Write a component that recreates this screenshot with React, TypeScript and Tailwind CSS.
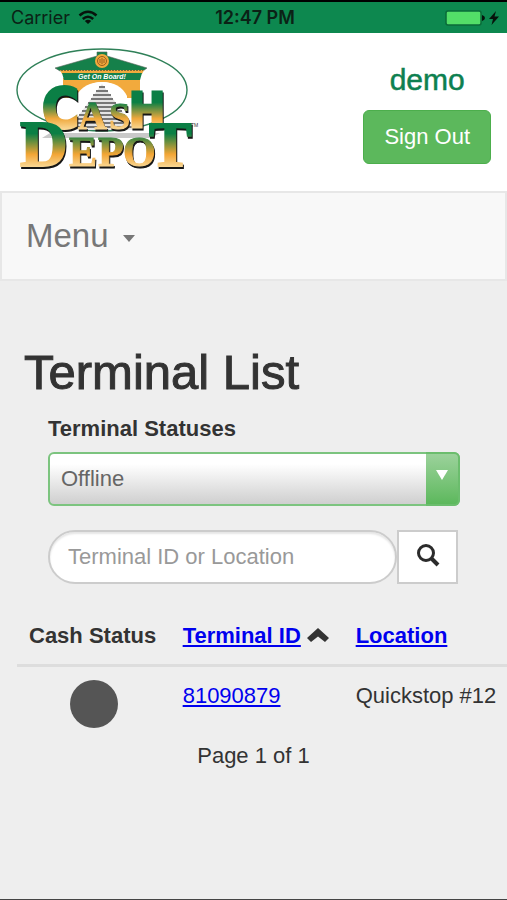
import { useState } from "react";

const terminals = [{ id: "81090879", location: "Quickstop #12", status: "bg-[#555]" }];

const statuses = ["Offline", "Online", "All"];

interface LogoLetter {
  char: string;
  x: number;
  y: number;
  size: number;
  font: string;
  fill: string;
  weight: number;
}

const sans = "'DejaVu Sans Condensed', 'DejaVu Sans', sans-serif";
const serif = "'Liberation Serif', serif";

const logoLetters: LogoLetter[] = [
  { char: "C", x: 42, y: 127, size: 56, font: sans, fill: "url(#cash)", weight: 3 },
  { char: "A", x: 78, y: 129, size: 40, font: serif, fill: "url(#cash)", weight: 1 },
  { char: "S", x: 109, y: 129, size: 38, font: serif, fill: "url(#cash)", weight: 1 },
  { char: "H", x: 129, y: 127, size: 48, font: sans, fill: "url(#cash)", weight: 3 },
  { char: "D", x: 20, y: 166, size: 66, font: serif, fill: "url(#depot)", weight: 2 },
  { char: "E", x: 69, y: 166, size: 42, font: serif, fill: "url(#depot)", weight: 1 },
  { char: "P", x: 98, y: 166, size: 42, font: serif, fill: "url(#depot)", weight: 1 },
  { char: "O", x: 123, y: 166, size: 42, font: serif, fill: "url(#depot)", weight: 1 },
  { char: "T", x: 149, y: 166, size: 64, font: serif, fill: "url(#depot)", weight: 2 },
];

function Logo() {
  return (
    <svg
      viewBox="12 44 188 132"
      className="h-[132px] w-[188px] shrink-0 overflow-visible"
      role="img"
      aria-label="Cash Depot"
    >
      <defs>
        <linearGradient id="cash" gradientUnits="userSpaceOnUse" x1="0" y1="84" x2="0" y2="130">
          <stop offset="0.4" stopColor="#0b7f45" />
          <stop offset="0.75" stopColor="#efa83c" />
          <stop offset="1" stopColor="#fbdc9c" />
        </linearGradient>
        <linearGradient id="depot" gradientUnits="userSpaceOnUse" x1="0" y1="122" x2="0" y2="168">
          <stop offset="0.25" stopColor="#0b7f45" />
          <stop offset="0.7" stopColor="#f2a535" />
          <stop offset="1" stopColor="#fbdc9c" />
        </linearGradient>
      </defs>
      <ellipse cx="102" cy="90" rx="85" ry="41" fill="#fff" stroke="#2f8058" strokeWidth="1.4" />
      <path d="M63 78H140V98H127Q118 82 102 82T76 98H63Z" fill="#f2aa3d" />
      <path d="M76 112V96Q84 82 102 82T127 96V112Z" fill="#fff" />
      <path d="M97 52H107V56L147 68L143 71H60L55 68L97 56Z" fill="#15804a" stroke="#59675c" strokeWidth="0.6" />
      <path d="M60 70H144L142 74H62Z" fill="#f2aa3d" />
      <path d="M61 70.500H143" stroke="#7d6b35" strokeWidth="1" strokeDasharray="2 1" />
      <path d="M62 73H142L140 80H64Z" fill="#15804a" />
      <text
        x="102"
        y="79"
        textAnchor="middle"
        fontSize="7"
        fontWeight="700"
        fontStyle="italic"
        fontFamily="'Liberation Sans', sans-serif"
        fill="#fff"
      >
        Get On Board!
      </text>
      <circle cx="102" cy="61" r="7" fill="#f2aa3d" />
      <circle cx="102" cy="61" r="4.500" fill="none" stroke="#9a5c1c" strokeWidth="1" />
      <path d="M100 59V63M102 58V64M104 59V63" stroke="#9a5c1c" strokeWidth="1" />
      <path d="M102 84L136 130H68Z" fill="#e4e4e4" />
      <path
        d="M99 87H105M96 91H108M93 95H111M91 99H113M88 103H116M85 107H119M82 111H122M79 115H125M76 119H128M73 123H131M70 127H134"
        stroke="#777"
        strokeWidth="2"
      />
      <path d="M50 133H160L150 138H42Z" fill="#c9c9c9" />
      {logoLetters.map((l) => (
        <text
          key={l.char}
          x={l.x}
          y={l.y}
          fontFamily={l.font}
          fontSize={l.size}
          fontWeight="700"
          fill={l.fill}
          stroke={l.fill}
          strokeWidth={l.weight}
          className="drop-shadow-[1px_2px_0_#161616]"
        >
          {l.char}
        </text>
      ))}
      <text x="191" y="127" fontSize="5" fontFamily="'Liberation Sans', sans-serif" fill="#333">
        TM
      </text>
    </svg>
  );
}

function StatusBar() {
  return (
    <div className="grid h-[33px] grid-cols-3 items-center border-t-2 border-black bg-[#0d884f] pr-2 pl-[11px] font-['Inter',sans-serif] text-lg text-[#0b2216]">
      <div className="flex items-center gap-2">
        <span>Carrier</span>
        <svg viewBox="0 0 20 15" className="h-[15px] w-5" fill="none" stroke="#07130c" aria-hidden>
          <path d="M1.500 5.500Q10 -2 18.500 5.500" strokeWidth="2.600" />
          <path d="M4.800 9Q10 4.500 15.200 9" strokeWidth="2.500" />
          <path d="M10 14L6.800 11Q10 8.500 13.200 11Z" fill="#07130c" stroke="none" />
        </svg>
      </div>
      <span className="text-center font-semibold whitespace-nowrap">12:47 PM</span>
      <div className="flex items-center justify-end gap-1">
        <svg viewBox="0 0 40 16" className="h-4 w-10" aria-hidden>
          <rect x="1" y="1" width="35" height="14" rx="2" fill="#53de68" stroke="#0a6b39" strokeWidth="1.500" />
          <path d="M37 5Q40 6 40 8T37 11Z" fill="#07130c" />
        </svg>
        <svg viewBox="0 0 10 16" className="h-4 w-2.5" aria-hidden>
          <path d="M7 1L0 9H4L2.500 15L10 6.500H5.500Z" fill="#07130c" />
        </svg>
      </div>
    </div>
  );
}

function Header() {
  return (
    <header className="flex items-start justify-between bg-white pt-[11px] pr-4 pb-[15px] pl-3">
      <Logo />
      <div className="flex flex-col items-center gap-3 pt-[18px]">
        <span className="text-[30px] leading-9 text-[#0d8050] [-webkit-text-stroke:0.5px_#0d8050]">
          demo
        </span>
        <button
          type="button"
          className="h-[54px] rounded-md border border-[#4cae4c] bg-[#5cb85c] px-5 text-white"
        >
          Sign Out
        </button>
      </div>
    </header>
  );
}

function StatusSelect() {
  const [status, setStatus] = useState(statuses[0]);

  return (
    <div className="relative mt-[7px]">
      <select
        id="status"
        value={status}
        onChange={(e) => setStatus(e.target.value)}
        className="h-[54px] w-full appearance-none rounded-md border-2 border-[#7cc47f] bg-linear-to-b from-white from-20% to-[#cfcfcf] pr-12 pl-[11px] text-[#666]"
      >
        {statuses.map((s) => (
          <option key={s}>{s}</option>
        ))}
      </select>
      <div className="pointer-events-none absolute inset-y-0 right-0 flex w-[34px] items-center justify-center rounded-r-md border-2 border-l-0 border-[#6bbd6d] bg-linear-to-b from-[#9bd29b] to-[#5cb85c] pb-2">
        <svg viewBox="0 0 12 10" className="h-2.5 w-3" aria-hidden>
          <path d="M0 0H12L6 10Z" fill="#fff" />
        </svg>
      </div>
    </div>
  );
}

function SearchBar() {
  return (
    <div className="mt-6 flex pr-0.5">
      <input
        type="text"
        aria-label="Terminal ID or Location"
        placeholder="Terminal ID or Location"
        className="h-[54px] min-w-0 flex-1 rounded-full border-2 border-[#ccc] bg-white px-[18px] shadow-[inset_0_2px_2px_rgba(0,0,0,0.1)] placeholder:text-[#999]"
      />
      <button
        type="button"
        aria-label="Search"
        className="flex h-[54px] w-[61px] items-center justify-center border-2 border-[#ccc] bg-white pb-1"
      >
        <svg viewBox="0 0 24 24" className="h-6 w-6" fill="none" stroke="#2b2b2b" aria-hidden>
          <circle cx="10" cy="10" r="7.500" strokeWidth="3" />
          <path d="M15 15L22 22" strokeWidth="4" />
        </svg>
      </button>
    </div>
  );
}

function TerminalTable() {
  return (
    <table className="mt-6 w-full text-left whitespace-nowrap">
      <thead>
        <tr className="border-b-3 border-[#ddd]">
          <th className="px-3 py-3">Cash Status</th>
          <th className="px-3 py-3">
            <div className="flex items-center gap-1.5">
              <a href="#terminal-id" className="text-[#0000ee] underline">
                Terminal ID
              </a>
              <svg viewBox="0 0 22 14" className="mb-0.5 h-3.5 w-[22px]" aria-hidden>
                <path d="M11 0L22 10L18 14L11 8.500L4 14L0 10Z" fill="#333" />
              </svg>
            </div>
          </th>
          <th className="py-3 pr-2 pl-3">
            <a href="#location" className="text-[#0000ee] underline">
              Location
            </a>
          </th>
        </tr>
      </thead>
      <tbody>
        {terminals.map((t) => (
          <tr key={t.id} className="align-top">
            <td className="px-3 pt-[13px]">
              <div className={`mx-auto h-12 w-12 rounded-full ${t.status}`} />
            </td>
            <td className="px-3 pt-[13px]">
              <a href={`#${t.id}`} className="text-[#0000ee] underline">
                {t.id}
              </a>
            </td>
            <td className="pt-[13px] pr-2 pl-3">{t.location}</td>
          </tr>
        ))}
      </tbody>
    </table>
  );
}

export default function App() {
  return (
    <div className="min-h-screen overflow-x-hidden border-b border-[#444] bg-[#eee] font-['Liberation_Sans',Arial,sans-serif] text-[22px] leading-8 text-[#333]">
      <StatusBar />
      <Header />
      <nav className="border-2 border-[#e7e7e7] bg-[#f8f8f8] px-6 py-[23px]">
        <button type="button" className="flex items-center gap-3.5 text-[33px] leading-10 text-[#777]">
          Menu
          <svg viewBox="0 0 12 7" className="mt-1 h-[7px] w-3" aria-hidden>
            <path d="M0 0H12L6 7Z" fill="#777" />
          </svg>
        </button>
      </nav>
      <main className="pt-[65px]">
        <h1 className="px-6 text-[49px] leading-[52px] [-webkit-text-stroke:1px_#333]">Terminal List</h1>
        <form className="mt-[15px] pr-[47px] pl-12" onSubmit={(e) => e.preventDefault()}>
          <label htmlFor="status" className="block font-bold">
            Terminal Statuses
          </label>
          <StatusSelect />
          <SearchBar />
        </form>
        <div className="pl-[17px]">
          <TerminalTable />
        </div>
        <p className="mt-3 text-center">Page 1 of 1</p>
      </main>
    </div>
  );
}
